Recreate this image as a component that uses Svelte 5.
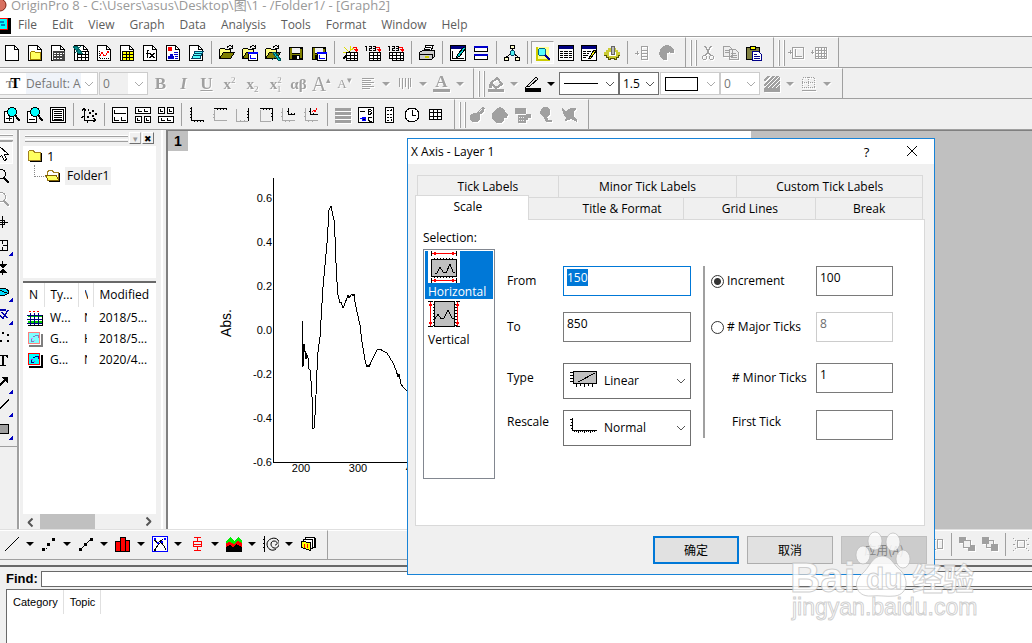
<script lang="ts">
	import { onMount } from 'svelte';

	let from = $state('150');
	let to = $state('850');
	let increment = $state('100');
	let major = $state('8');
	let minor = $state('1');
	let firstTick = $state('');
	let mode = $state('increment');
	let find = $state('');
	let fromInput: HTMLInputElement;

	onMount(() => {
		fromInput.focus();
		fromInput.select();
	});

	const menus = ['File', 'Edit', 'View', 'Graph', 'Data', 'Analysis', 'Tools', 'Format', 'Window', 'Help'];

	const page = '<path d="M1.5.5h9l4 4v11h-13z" fill="#fff" stroke="#000"/><path d="M10.5.5v4h4" fill="none" stroke="#000"/>';
	const folder = '<path d="M.5 13.5v-9l1-1h4l1 1h5v3" fill="#ffff80" stroke="#000"/><path d="M.5 13.5l4-6h11l-4 6z" fill="#808000" stroke="#000"/><path d="M8 3c1-3 4-3 5-1m0-2v3h-3" fill="none" stroke="#000"/>';
	const floppy = '<path d="M1 2h14v13H1z" fill="#000"/><path d="M2 3h2v11H2zM12 4h2v9h-2zM4 9h8v1H4z" fill="#808000"/><path d="M4 3h8v5H4z" fill="#f0f0f0"/><path d="M9 11h2v3H9z" fill="#fff"/>';
	const mini = '<path d="M6.500 7.500h9v8h-9z" fill="#fff" stroke="#000"/><path d="M6 7h10v2H6z" fill="#00f"/><path d="M8.500 10v3.500h5" fill="none" stroke="#00f"/>';
	const tableMini = '<path d="M4.500 7.500h11v8h-11z" fill="#fff" stroke="#000"/><path d="M4 10.500h12M4 13.500h12M8.500 7v9M12.500 7v9" fill="none" stroke="#000"/>';
	const nums = '<path d="M0 1.500h1.500V6M4 1.500h2v2H4v2h2.500M8 1.500h2v4H8m0-2h2" fill="none" stroke="#000"/>';
	const redArrow = '<path d="M11 2.500h3.500V6" fill="none" stroke="red"/><path d="M12 4h5l-2.500 3z" fill="red"/>';
	const lens = '<circle cx="8" cy="5" r="4.500" fill="#0ff" stroke="#000"/><path d="M11 8l4.500 6" stroke="#000" stroke-width="2"/>';
	const axes = (c: string, d: string) => `<path d="${d}" fill="none" stroke="${c}"/>`;
	const windowFrame = '<path d="M.5.500h15v15H.5z" fill="#fff" stroke="#000"/><path d="M1 1h14v3H1z" fill="#000080"/>';
	const graphThumb = (o: number) =>
		`<g opacity="${o}"><path d="M15 3v12H2" fill="none" stroke="#000" stroke-width="2"/><path d="M1.500 1.500h11v11h-11z" fill="#0ff" stroke="#f00"/><path d="M4.500 8v2h2M6 5.500h2M8 4.500h3v2" fill="none" stroke="#000080"/><path d="M4 7h2v1H4zM7 9h1v1H7z" fill="#c0f"/></g>`;

	const icons: Record<string, string> = {
		newProject: page,
		newFolder: page + '<path d="M3.500 14.500v-7l1-1h3l1 1h5v7z" fill="#ffff60" stroke="#a08000"/>',
		newSheet: page + '<path d="M3 6h12v10H3z" fill="#444"/><path d="M4 8h2v1H4zM7 8h2v1H7zM10 8h2v1h-2zM13 8h1v1h-1zM4 10h2v1H4zM7 10h2v1H7zM10 10h2v1h-2zM4 13h2v1H4zM7 13h2v1H7zM10 13h2v1h-2z" fill="#fff"/>',
		newExcel: page + '<path d="M4.500 6.500h11v9h-11zM4 9.500h12M4 12.500h12M8.500 6v10M12 6v10" fill="#fff" stroke="#000"/><path d="M0 1h4l5 7H5zM8 1L2 8" fill="#008b8b" stroke="#006060"/>',
		newGraph: page + '<path d="M3.500 6v7.500H13" fill="none" stroke="#000" stroke-dasharray="1 1"/><path d="M4 11l2-4 2 4 2-1 2-4 1 2" fill="none" stroke="red"/>',
		newMatrix: page + '<path d="M3 6h12v10H3z" fill="#000"/><path d="M4 7h3v2H4zM8 7h2v2H8zM11 7h3v2h-3zM4 10h3v2H4zM8 10h2v2H8zM11 10h3v2h-3zM4 13h3v2H4zM8 13h2v2H8zM11 13h3v2h-3z" fill="#ff0"/>',
		newFunction: page + '<path d="M7 5.500H5.500V13M4 8.500h3M8 8l4 5m0-5l-4 5" fill="none" stroke="#000" stroke-width="1.500"/>',
		newLayout: page + '<path d="M3 2h4v4H3z" fill="red"/><path d="M3 14h6v-3H8V9H5v2H3z" fill="#00c"/><path d="M9 7.500h4M9 9.500h4M10 11.500h3M10 13.500h3" stroke="#00c"/>',
		newNotes: page + '<path d="M4 13.500l3-7h8l-3 7z" fill="#5ff" stroke="#046"/><path d="M6 8.500h8M5 10.500h8" stroke="#046"/>',
		open: folder,
		openTemplate: folder + mini,
		openExcel: folder + '<path d="M7 7h3l6 8h-3zM15 7l-8 8" fill="#0cc" stroke="#055"/>',
		save: floppy,
		saveTemplate: floppy + mini,
		wizard: '<path d="M1 14L8 7" stroke="#000" stroke-width="2"/><path d="M2 2l5 5M8 1v5M1 7h5M12 3L8 6" stroke="#dd0"/>' + tableMini + redArrow,
		importOne: nums + tableMini + redArrow,
		importMany: nums + '<path d="M1.500 7.500h9v6h-9z" fill="#fff" stroke="#000"/><path d="M1 10.500h9" stroke="#000"/>' + tableMini + redArrow,
		print: '<path d="M4.500 6.500L7 .5h7l-2 6z" fill="#fff" stroke="#000"/><path d="M.5 7.500l3-2h12v6l-3 3H.5z" fill="#ccc" stroke="#000"/><path d="M7 2.500h5M6 4.500h5M1 9.500h12v4" fill="none" stroke="#000"/><path d="M6 12h4" stroke="#cc0" stroke-width="2"/>',
		refresh: windowFrame + '<path d="M2.500 6v7.500H14" fill="none" stroke="#000"/><path d="M14 2L8 9l-2 4 4-2 5-7" fill="#0cc" stroke="#000"/>',
		duplicate: '<path d="M1.500 1.500h13v5h-13zM1.500 9.500h13v5h-13z" fill="#fff" stroke="#000"/><path d="M1 1h14v2H1zM1 9h14v2H1z" fill="#00c"/>',
		explorer: '<path d="M6.500.500h4v3h-4zM.500 12.500h4v3h-4zM11.500 12.500h4v3h-4z" fill="#ffc" stroke="#000"/><path d="M8.500 4v4M2.500 12l5-4M14 12L9 8" fill="none" stroke="#000"/><circle cx="8.500" cy="8" r="2.500" fill="#5ee" stroke="#046"/>',
		results: '<path d="M1 2h13v12H1z" fill="#ffff90"/><path d="M1.500 2v12.500H15" fill="none" stroke="#cc0" stroke-width="2"/><circle cx="7" cy="7" r="4" fill="#5ff" stroke="#068"/><path d="M10 10l5 5" stroke="#008" stroke-width="2"/>',
		scriptWindow: windowFrame + '<path d="M2 6.500h3m1 0h4m1 0h3M2 8.500h3m1 0h4m1 0h3M2 10.500h3m1 0h4m1 0h3M2 12.500h3m1 0h4m1 0h3" stroke="#000"/>',
		codeBuilder: windowFrame + '<path d="M2 6.500h3m1 0h4M2 8.500h3m1 0h2M2 10.500h5M2 12.500h3" stroke="#000"/><path d="M8 13l5-8 2 1-5 7z" fill="#ff0" stroke="#000"/>',
		gear: '<path d="M0 7h2V5h2V3h8v2h2v2h2v4h-2v2h-2v2h-2v-1H6v1H4v-2H2v-2H0z" fill="#cc3"/><path d="M0 10.500h2v2h2v2h2v-1h4v1h2v-2h2v-2h2" fill="none" stroke="#550"/><path d="M5 7h7v4H5z" fill="#fff"/><path d="M7 1h3v8H7z" fill="#bbb" stroke="#666"/>',
		addColumn: '<path d="M0 8h4M2 6v4M6.500 1.500h6v13h-6zM6 5.500h7M6 8.500h7M6 11.500h7" fill="none" stroke="currentColor"/>',
		mask: '<path d="M9 8v7H5l-3-3-1-4 2-5 5-3 5 1 3 4v3h-4V7z" fill="currentColor"/>',
		cut: '<path d="M5 1l5 9M11 1L6 10" stroke="currentColor" stroke-width="1.500"/><circle cx="4.500" cy="12.500" r="2" fill="none" stroke="currentColor"/><circle cx="11.500" cy="12.500" r="2" fill="none" stroke="currentColor"/>',
		copy: '<path d="M.5 1.500h6l3 3v7h-9zM6.500 4.500h6l3 3v7h-9z" fill="#eee" stroke="currentColor"/><path d="M2 5.500h5M2 7.500h4M8 8.500h5M8 10.500h6M8 12.500h6" stroke="currentColor"/>',
		paste: '<path d="M.5 2.500h13v12H.5z" fill="#808040" stroke="#000"/><path d="M4.500 1.500h5v3h-5z" fill="#ff0" stroke="#000"/><path d="M6.500 6.500h6l3 3v6h-9z" fill="#fff" stroke="#008"/><path d="M8 9.500h3M8 11.500h6M8 13.500h6" stroke="#008"/>',
		addLayer: '<path d="M0 7h4M2 5v4M4.500 2.500h11v11h-11zM7.500 4v7.500H14" fill="none" stroke="currentColor"/>',
		addGrid: '<path d="M0 7h3M1.500 5v4M4.500 2.500h11v11h-11zM4 5.500h12M4 8.500h12M4 11.500h12M7.500 2v12M10.500 2v12M13.500 2v12" fill="none" stroke="currentColor"/>',
		alignLeft: '<path d="M2 2.500h12M2 4.500h9M2 6.500h12M2 8.500h9M2 10.500h12M2 12.500h8" stroke="currentColor"/>',
		spacing: '<path d="M2.500 2v9M5.500 2v11M8.500 2v9M11.500 2v11M13.500 2v9" stroke="currentColor"/>',
		fill: '<path d="M3 7l6-5 5 6-6 4z" fill="none" stroke="currentColor" stroke-width="2"/><path d="M1 8l3-3v7H1zM0 13h16v3H0z" fill="currentColor"/>',
		pencil: '<path d="M3 9l8-8 2 2-8 7-4 1z" fill="#ddd" stroke="#000"/><path d="M0 12h16v4H0z" fill="#000"/>',
		hatch: '<path d="M0 5l5-5M0 10L10 0M1 13L14 0M5 13L16 2M9 13l7-7M13 13l3-3" stroke="currentColor" stroke-width="1.500"/><path d="M0 12h16v4H0z" fill="currentColor"/>',
		borders: '<path d="M1.500 1.500h12v10h-12zM7.500 1v11M1 6.500h13" fill="none" stroke="currentColor" stroke-dasharray="1 1"/><path d="M1 14.500h14" stroke="currentColor"/>',
		zoomIn: '<path d="M.5 4.500h9v11h-9z" fill="#fff" stroke="#000"/>' + lens + '<path d="M2 11.500h6M5.500 9v5" stroke="#000"/>',
		zoomOut: '<path d="M.5 4.500h9v11h-9z" fill="#fff" stroke="#000"/>' + lens + '<path d="M2 12.500h6" stroke="#000"/>',
		wholePage: '<path d="M.5.500h15v15H.5zM2.500 2.500h11v11h-11z" fill="#fff" stroke="#000"/><path d="M4 4.500h8M4 6.500h8M4 8.500h8M4 10.500h8M4 12h8" stroke="#000"/>',
		rescale: '<path d="M3.500 2v11.500H15M1 4l2-3 2 3M12 11l3 2-3 2M0 11l3-2M6 16v-3" fill="none" stroke="#000"/><path d="M6 9h2v2H6zM8 5h2v2H8zM11 3h2v2h-2zM11 8h2v2h-2zM7 2h1v2H7zM14 6h2v2h-2z" fill="#000"/>',
		layerOne: '<path d="M.5.500h15v15H.5z" fill="#fff" stroke="#000"/><path d="M2.500 3v3.500h11M2.500 10v3.500H7M9.500 10v3.500H14" fill="none" stroke="#000"/>',
		layerTwo: '<path d="M.5.500h15v6H.5zM.5 9.500h6v6h-6zM9.500 9.500h6v6h-6z" fill="#fff" stroke="#000"/><path d="M3.500 2v2.500H7M9.500 2v2.500H13M2.500 11v2.500H5M11.500 11v2.500H14" fill="none" stroke="#000"/>',
		layerFour: '<path d="M.5.500h6v6h-6zM9.500.500h6v6h-6zM.5 9.500h15v6H.5z" fill="#fff" stroke="#000"/><path d="M2.500 2v2.500H5M11.500 2v2.500H14M3.500 11v2.500H7M9.500 11v2.500H13" fill="none" stroke="#000"/>',
		axisBL: axes('#000', 'M2.500 0v13.500H15M1 1.500h2M1 4.500h2M1 7.500h2M1 10.500h2M5.500 14v1M8.500 14v1M11.500 14v1M14.500 14v1'),
		axisTop: axes('#aaa', 'M2.500 3v10.500H15M1 7.500h2M1 10.500h2') + axes('#000', 'M2 1.500h13M5.500 1v2M8.500 1v2M11.500 1v2M14.500 1v2'),
		axisRight: axes('#aaa', 'M1.500 2v12.500H13M5.500 13v2M9.500 13v2') + axes('#000', 'M13.500 1v13M12 4.500h2M12 7.500h2M12 10.500h2'),
		axisTR: axes('#aaa', 'M2.500 3v11.500H13') + axes('#000', 'M2 1.500h12.500V14M5.500 1v2M8.500 1v2M11.500 1v2M13 6.500h2M13 9.500h2'),
		axisInset: axes('#aaa', 'M1.500 1v12.500H14M0 5.500h2M0 9.500h2M4.500 13v2M8.500 13v2') + axes('#000', 'M7.500 1v6.500H14M6 4.500h2M10.500 6v2M13.500 6v2'),
		axisInsetData: axes('#aaa', 'M1.500 1v12.500H14M0 5.500h2M0 9.500h2M4.500 13v2M8.500 13v2') + axes('#000', 'M6.500 1v6.500H14M5 4.500h2M9.500 6v2') + axes('red', 'M8 5l2-2 1 2 2-4'),
		merge: '<path d="M0 1h16v3H0zM0 5h16v3H0zM0 9h16v3H0zM0 13h16v3H0z" fill="currentColor"/>',
		legend: '<path d="M.5.500h15v15H.5z" fill="#fff" stroke="#000"/><path d="M2 4.500h5" stroke="#000"/><path d="M2 11.500h6M4 10h3v3H4z" stroke="#00f"/><path d="M10.500 2v5h2l1-1-1-1.500h-2m0-2h2l1 1-1 1.500M13.500 10h-2l-1 1v2l1 1h2" fill="none" stroke="#000"/>',
		colorScale: '<path d="M4.500.500h8v15h-8z" fill="#fff" stroke="#000"/><path d="M6 3h2M6 7h2M6 10h2M6 13h2M9 3h2M10 2v2M9 7h2M9 10h2M10 12v2" stroke="#000"/>',
		clock: '<circle cx="8" cy="8" r="7" fill="#fff" stroke="#000"/><path d="M8.500 3v5.500H12" fill="none" stroke="#000"/>',
		table: '<path d="M2.500 2.500h12v10h-12z" fill="#fff" stroke="#000"/><path d="M2 5.500h13M2 9.500h13M6.500 2v11M10.500 2v11" stroke="#000"/>',
		toolA: '<path d="M1 8l4-2h3l5-6 3 1-2 5-3 1v5l-3 3H3l-2-3z" fill="currentColor"/><path d="M10 5l3-3" stroke="#f0f0f0"/>',
		toolB: '<path d="M4 2l4-2 4 2 2 4 2 2-1 3h-3v3l-3 2H4l-4-4V6z" fill="currentColor"/>',
		toolC: '<path d="M0 1h11v6H0zM3 8h8v8H3zM11 7h5v4h-3v2h-2z" fill="currentColor"/><path d="M4 10.500h6M4 13.500h6" stroke="#f0f0f0" stroke-dasharray="1 1"/>',
		toolD: '<path d="M3 2l3-2h3l3 2v5l-3 4H6L2 7zM6 11l2 4h6v-2h-4v-2" fill="currentColor"/>',
		toolE: '<path d="M1 1l4 3 5-3h5v2l-2 1v6l3 3v2l-4-2-2-1-3 1-3 1 1-3-3-5z" fill="currentColor"/>',
		line: '<path d="M1 15L15 1" stroke="#000"/>',
		scatter: '<path d="M1 12h3v3H1zM6 7h3v3H6zM11 2h3v3h-3zM5 12h1v1H5z" fill="#000"/>',
		lineSymbol: '<path d="M2 14L14 2" stroke="#000"/><path d="M1 12h3v3H1zM6 7h3v3H6zM12 2h3v3h-3z" fill="#000"/>',
		columns: '<path d="M.5 5.500h5v10h-5zM5.500 1.500h5v14h-5zM10.500 4.500h4v11h-4z" fill="red" stroke="#000"/>',
		multiPanel: '<path d="M.5.500h15v15H.5z" fill="#fff" stroke="#00f"/><path d="M3 14l3-5 3-3 3 4 2 4M2 4l4 3 5-4" fill="none" stroke="#000"/><path d="M5 6h2v2H5zM9 5h2v2H9zM12 2h2v2h-2zM2 2h2v2H2z" fill="#00f"/><path d="M2 13h2v2H2z" fill="#000"/>',
		boxPlot: '<path d="M5 1.500h7M5 14.500h7M8.500 2v3M8.500 11v4M4.500 5.500h8v5h-8zM4 8.500h9" fill="none" stroke="red"/>',
		area: '<path d="M0 5l4-4 4 4 4-4 4 4v6H0z" fill="#0e0"/><path d="M0 7l4-1 4 2 4-3 4 2v8H0z" fill="red"/><path d="M0 11l4-2 3 2 3-3 6 3v5H0z" fill="#000"/>',
		polar: '<path d="M1.500 0v16M0 3.500h2M0 7.500h2M0 11.500h2" stroke="#000"/><path d="M13 13c-4 3-9 0-9-5s8-8 11-4 0 9-4 8-4-7 0-7 4 4 1 4" fill="none" stroke="#000" shape-rendering="auto"/>',
		templates: '<path d="M5.500 1.500h9v10h-9z" fill="#fff" stroke="#000"/><path d="M3.500 3.500h9v9h-9z" fill="#fff" stroke="#000"/><path d="M1.500 5.500l9 1v8l-9-3z" fill="#ff0" stroke="#000"/><path d="M4.500 8v4M7.500 8v4" stroke="red"/><path d="M15 2v10" fill="none" stroke="#000"/>',
		alignObjects: '<path d="M2.500 1v14M5 3h3M5 13h3M9.500 3.500h5v9h-5z" fill="none" stroke="currentColor"/>',
		bringFront: '<path d="M0 1h7v6H0zM9 9h7v6H9z" fill="currentColor"/><path d="M4.500 4.500h7v7h-7z" fill="#f0f0f0" stroke="currentColor"/>',
		sendBack: '<path d="M4.500 4.500h7v7h-7z" fill="#f0f0f0" stroke="currentColor"/><path d="M0 1h7v7H0zM9 8h7v7H9z" fill="currentColor"/>',
		group: '<path d="M4.500 4.500h7v7h-7z" fill="none" stroke="currentColor"/><path d="M0 2h1v1H0zM2 4h1v1H2zM13 4h1v1h-1zM15 2h1v1h-1zM0 8h2v1H0zM14 8h2v1h-2zM2 12h1v1H2zM0 14h1v1H0zM13 12h1v1h-1zM15 14h1v1h-1z" fill="currentColor"/>',
		pointer: '<path d="M4.500.500v13l3-3 3 5 2-1-2-5h4z" fill="#fff" stroke="#000"/>',
		magnify: '<circle cx="7" cy="6" r="4.500" fill="none" stroke="currentColor"/><path d="M10 10l5 5" stroke="currentColor" stroke-width="2"/>',
		reader: '<path d="M8.500 2v12M2 8.500h12M5.500 6.500h5v4h-5z" fill="none" stroke="#000"/>',
		screenReader: '<path d="M2.500 3.500h11v10h-11zM8.500 4v3M8.500 10v3M9 8.500h5M3 8.500h3" fill="none" stroke="#000"/>',
		dataSelect: '<path d="M8.500 1v4M8.500 11v4" stroke="#000"/><path d="M4 4h9l-4 4zM4 13h9L9 9z" fill="#000"/>',
		maskTool: '<path d="M1 9c4-6 12-4 14 0-2 4-10 5-14 0z" fill="#0df" stroke="#000"/><path d="M3 6l12 5" stroke="#000"/>',
		drawTool: '<path d="M2 13L6 4h6M5 9l4 3 5-8M8 6l5 6" fill="none" stroke="#00a" stroke-width="1.500"/>',
		dots: '<path d="M3 6h2v2H3zM8 3h2v2H8zM13 5h2v2h-2zM6 11h2v2H6zM13 11h2v2h-2z" fill="#000"/>',
		textTool: '<path d="M3 3h11v3h-1l-1-2H9.500v9H12v1H6v-1h2V4H5L4 6H3z" fill="#000"/>',
		arrowTool: '<path d="M2 14L12 4" stroke="#000" stroke-width="2"/><path d="M7 2h7v7z" fill="#000"/>',
		lineTool: '<path d="M2 14L15 2" stroke="#000" stroke-width="1.500"/>',
		rectTool: '<path d="M1.500 3.500h13v9h-13z" fill="#a0a0a0" stroke="#000"/>',
		folderClosed: '<path d="M1.500 12.500v-9l1-1h4l1 2h6v8z" fill="#ffff60" stroke="#a08020"/><path d="M14.500 5v8.500H3" fill="none" stroke="#000"/>',
		folderOpen: '<path d="M2.500 12.500v-8l1-2h4l1 2h5v8z" fill="#fff" stroke="#a08020"/><path d="M3.500 12.500l-3-5h11l2 5z" fill="#ffff60" stroke="#806000"/><path d="M14.500 5v8.500H4" fill="none" stroke="#000"/>',
		sheetFile: '<path d="M1 3h14v12H1z" fill="#fff"/><path d="M1 6h14M1 12h14" stroke="#0c0" stroke-width="2"/><path d="M0 5.500h16M0 9.500h16M0 13.500h16M3.500 3v13M7.500 3v13M11.500 3v13" stroke="#000080"/><path d="M1 15.500h15M15.500 5v11" stroke="#000"/><path d="M2 1h2v1H2zM6 1h2v1H6zM10 1h2v1h-2z" fill="red"/>',
		graphFileDim: graphThumb(0.5),
		graphFile: graphThumb(1)
	};

	// text drawn on the format buttons
	const glyphs: Record<string, string> = {
		bold: '<b>B</b>',
		italic: '<b><i>I</i></b>',
		underline: '<b><u>U</u></b>',
		sup: '<b class="x">x</b><sup>2</sup>',
		sub: '<b class="x">x</b><sub>2</sub>',
		supsub: '<b class="x">x</b><sup>2</sup><sub class="under">1</sub>',
		greek: '<b class="x">αβ</b>',
		bigger: '<big>A</big><sup>▴</sup>',
		smaller: '<small>A</small><sup>▾</sup>',
		fontColor: '<b class="bar">A</b>'
	};

	const standard = [
		['newProject', 'newFolder', 'newSheet', 'newExcel', 'newGraph', 'newMatrix', 'newFunction', 'newLayout', 'newNotes', '|',
			'open', 'openTemplate', 'openExcel', 'save', 'saveTemplate', '|', 'wizard', 'importOne', 'importMany', '|', 'print', '|',
			'refresh', 'duplicate', '|', 'explorer', '|', 'results', 'scriptWindow', 'codeBuilder', 'gear', '|', 'addColumn', 'mask'],
		['cut', 'copy', 'paste'],
		['addLayer', 'addGrid']
	];
	const format = ['bold', 'italic', 'underline', 'sup', 'sub', 'supsub', 'greek', 'bigger', 'smaller',
		'alignLeft', 'v', 'spacing', 'v', 'fontColor', 'v'];
	const graphBars = [
		['zoomIn', 'zoomOut', 'wholePage', '|', 'rescale', '|', 'layerOne', 'layerTwo', 'layerFour', '|',
			'axisBL', 'axisTop', 'axisRight', 'axisTR', 'axisInset', 'axisInsetData', '|', 'merge', 'legend', 'colorScale', 'clock', 'table'],
		['toolA', 'toolB', 'toolC', 'toolD', 'toolE']
	];
	const plots = ['line', 'V', 'scatter', 'V', 'lineSymbol', 'V', 'columns', 'V', 'multiPanel', 'V', 'boxPlot', 'V', 'area', 'V', 'polar', 'V', 'templates'];
	const objects = ['alignObjects', '|', 'bringFront', 'sendBack', '|', 'group'];
	const tools = ['pointer', 'magnify', 'magnify', 'reader', 'screenReader', 'dataSelect', 'maskTool', 'drawTool', 'dots', 'textTool', 'arrowTool', 'lineTool', 'rectTool'];
	const flyouts = [4, 6, 7, 10, 11, 12];

	const files = [
		{ icon: 'sheetFile', type: 'W...', view: 'N', modified: '2018/5...' },
		{ icon: 'graphFileDim', type: 'G...', view: 'H', modified: '2018/5...' },
		{ icon: 'graphFile', type: 'G...', view: 'N', modified: '2020/4...' }
	];

	const yTicks = ['0.6', '0.4', '0.2', '0.0', '-0.2', '-0.4', '-0.6'];
	const xTicks = ['200', '300', '400'];
	const curve =
		'134,190 134,236 135,235 135,219 136,213 136,221 137,220 138,228 138,222 140,227 141,238 142,239 143,250 144,266 144,286 145,298 146,297 147,284 148,264 149,239 150,221 152,206 153,189 155,156 157,134 159,112 160,96 160,81 162,77 163,75 164,80 166,89 167,106 168,132 169,151 170,164 172,172 173,171 174,174 175,177 176,175 177,172 179,167 180,164 181,167 184,163 185,165 186,163 187,171 189,181 192,194 194,211 197,229 199,236 200,234 201,236 203,231 205,227 209,219 212,218 215,220 219,222 222,227 225,232 228,239 230,246 231,243 233,253 235,256 239,260 246,268';
</script>

{#snippet icon(name: string)}
	<svg class="icon" width="16" height="16" viewBox="0 0 16 16" shape-rendering="crispEdges" aria-hidden="true">{@html icons[name]}</svg>
{/snippet}

{#snippet chevron()}
	<svg class="chevron" width="10" height="6" viewBox="0 0 10 6" fill="none" aria-hidden="true">
		<path d="M1 1l4 4 4-4" stroke="currentColor" />
	</svg>
{/snippet}

{#snippet buttons(items: string[], dim = false)}
	{#each items as item}
		{#if item === '|'}
			<span class="sep"></span>
		{:else if item === 'v' || item === 'V'}
			<button class="arrow" class:dim={item === 'v'} aria-label="More"></button>
		{:else if glyphs[item]}
			<button class="tool glyph dim" aria-label={item}>{@html glyphs[item]}</button>
		{:else}
			<button
				class="tool"
				class:dim={dim || ['addColumn', 'mask', 'cut', 'copy', 'merge'].includes(item)}
				class:pressed={item === 'results'}
				aria-label={item}
			>{@render icon(item)}</button>
		{/if}
	{/each}
{/snippet}

<div class="app">
	<header>
		<div class="titlebar">
			<svg width="8" height="16" viewBox="0 0 8 16" aria-hidden="true">
				<circle cx="0" cy="7" r="6" fill="#d87060" stroke="#802010" />
			</svg>
			<span>OriginPro 8 - C:\Users\asus\Desktop\图\1 - /Folder1/ - [Graph2]</span>
		</div>
		<nav>
			<svg width="12" height="18" viewBox="0 0 12 18" aria-hidden="true">
				<path d="M0 2h11v16H0z" fill="#000" />
				<path d="M0 2.500h7.500v11H0" fill="#0ff" stroke="red" />
				<path d="M0 6h4M1 9h4" stroke="#000080" />
			</svg>
			{#each menus as menu}
				<button>{menu}</button>
			{/each}
		</nav>
	</header>

	<div class="row">
		{#each standard as bar, i}
			<div class="bar">
				{#if i > 0}<span class="grip"></span>{/if}
				{@render buttons(bar, i === 2)}
			</div>
		{/each}
	</div>

	<div class="row">
		<div class="bar format">
			<label class="combo font off">
				<b class="tt">T<span>T</span></b>
				<select aria-label="Font"><option>Default: Arial</option></select>
				{@render chevron()}
			</label>
			<label class="combo size off">
				<select aria-label="Font size"><option>0</option></select>
				{@render chevron()}
			</label>
			{@render buttons(format, true)}
		</div>
		<div class="bar">
			<span class="grip"></span>
			{@render buttons(['fill', 'v'], true)}
			{@render buttons(['pencil', 'V'])}
			<label class="combo wide">
				<span class="stroke"></span>
				<select aria-label="Line style"><option></option></select>
				{@render chevron()}
			</label>
			<label class="combo narrow">
				<select aria-label="Line width"><option>1.5</option></select>
				{@render chevron()}
			</label>
			<label class="combo wide off">
				<span class="swatch"></span>
				<select aria-label="Border"><option></option></select>
				{@render chevron()}
			</label>
			<label class="combo narrow off">
				<select aria-label="Gap"><option>0</option></select>
				{@render chevron()}
			</label>
			{@render buttons(['hatch', 'v', 'borders', 'v'], true)}
		</div>
	</div>

	<div class="row">
		{#each graphBars as bar, i}
			<div class="bar">
				{#if i > 0}<span class="grip"></span>{/if}
				{@render buttons(bar, i > 0)}
			</div>
		{/each}
	</div>

	<main>
		<aside class="toolbox">
			<div class="tools">
				<span class="hgrip"></span>
				{#each tools as tool, i}
					<button class="tool" class:dim={i === 2} class:pressed={i === 0} class:flyout={flyouts.includes(i)} aria-label={tool}>
						{@render icon(tool)}
					</button>
				{/each}
			</div>
		</aside>

		<aside class="project">
			<div class="caption">
				<span class="hgrip"></span>
				<button class="tiny soft" aria-label="Menu">▾</button>
				<button class="tiny" aria-label="Close">✖</button>
			</div>
			<div class="tree">
				<div class="node">{@render icon('folderClosed')}<span>1</span></div>
				<div class="node child"><i></i>{@render icon('folderOpen')}<span class="current">Folder1</span></div>
			</div>
			<div class="files">
				<table>
					<thead>
						<tr><th>N</th><th>Ty...</th><th><div>V</div></th><th>Modified</th></tr>
					</thead>
					<tbody>
						{#each files as file}
							<tr>
								<td>{@render icon(file.icon)}</td>
								<td>{file.type}</td>
								<td><div>{file.view}</div></td>
								<td>{file.modified}</td>
							</tr>
						{/each}
					</tbody>
				</table>
			</div>
			<div class="scroll">
				<button class="left" aria-label="Scroll left">{@render chevron()}</button>
				<span class="thumb"></span>
				<button class="right" aria-label="Scroll right">{@render chevron()}</button>
			</div>
		</aside>

		<section class="workspace">
			<div class="graph">
				<button class="layer">1</button>
				<svg class="plot" width="584" height="398" viewBox="0 0 584 398">
					<path d="M105.500 47v284.500H560" fill="none" stroke="#000" shape-rendering="crispEdges" />
					<polyline points={curve} fill="none" stroke="#000" shape-rendering="crispEdges" />
					{#each yTicks as tick, i}
						<text x="104" y={71 + i * 44} text-anchor="end">{tick}</text>
					{/each}
					{#each xTicks as tick, i}
						<text x={133 + i * 57} y="341" text-anchor="middle">{tick}</text>
					{/each}
					<text class="axis" transform="translate(63 192) rotate(-90)" text-anchor="middle">Abs.</text>
				</svg>
			</div>
		</section>
	</main>

	<div class="row bottom">
		<div class="bar">{@render buttons(plots)}</div>
		<div class="bar last">{@render buttons(objects, true)}</div>
	</div>

	<footer>
		<label class="find">Find: <input type="text" bind:value={find} /></label>
		<div class="results">
			<table>
				<thead><tr><th>Category</th><th>Topic</th></tr></thead>
			</table>
		</div>
	</footer>

	<!-- axis dialog floats over the graph window -->
	<div class="dialog" role="dialog" aria-label="X Axis - Layer 1">
		<div class="dialog-title">
			<span>X Axis - Layer 1</span>
			<button aria-label="Help">?</button>
			<button aria-label="Close">
				<svg width="12" height="12" viewBox="0 0 12 12" aria-hidden="true"><path d="M1 1l10 10M11 1L1 11" stroke="#000" /></svg>
			</button>
		</div>
		<div class="dialog-body">
			<div class="tabs back" role="tablist">
				<button role="tab">Tick Labels</button>
				<button role="tab">Minor Tick Labels</button>
				<button role="tab">Custom Tick Labels</button>
			</div>
			<div class="tabs front" role="tablist">
				<button role="tab" class="active" aria-selected="true">Scale</button>
				<button role="tab">Title &amp; Format</button>
				<button role="tab">Grid Lines</button>
				<button role="tab">Break</button>
			</div>
			<div class="panel">
				<div class="selection">
					<span id="selection">Selection:</span>
					<div class="list" role="listbox" aria-labelledby="selection">
						<div class="option selected" role="option" aria-selected="true">
							<svg width="32" height="32" viewBox="0 0 32 32" shape-rendering="crispEdges" aria-hidden="true">
								<path d="M0 0h32v32H0z" fill="#fff" />
								<path d="M3.500 8.500h25v17h-25z" fill="#c0c0c0" stroke="#000" />
								<path d="M6 7.500h21M6 26.500h21" stroke="#000" stroke-dasharray="1 2" />
								<path d="M3.500 0v5M28.500 0v5M3.500 27v5M28.500 27v5" stroke="#000" />
								<path d="M5 2.500h23M5 29.500h23" stroke="red" />
								<path d="M4 2.500l4-2v4zM28 2.500l-4-2v4zM4 29.500l4-2v4zM28 29.500l-4-2v4z" fill="red" />
								<path d="M7 22h2l3-6 3 5 3 1 4-9 3 8h2" fill="none" stroke="#000" />
							</svg>
							Horizontal
						</div>
						<div class="option" role="option" aria-selected="false">
							<svg width="32" height="32" viewBox="0 0 32 32" shape-rendering="crispEdges" aria-hidden="true">
								<path d="M6.500 2.500h20v25h-20z" fill="#c0c0c0" stroke="#000" />
								<path d="M5.500 5v22M27.500 5v22" stroke="#000" stroke-dasharray="1 2" stroke-width="2" />
								<path d="M0 2.500h5M0 27.500h5M28 2.500h4M28 27.500h4" stroke="#000" />
								<path d="M2.500 3v24M29.500 3v24" stroke="red" />
								<path d="M2.500 3l-2 4h4zM2.500 27l-2-4h4zM29.500 3l-2 4h4zM29.500 27l-2-4h4z" fill="red" />
								<path d="M7 20l3-5 3 5 3-1 4-8 4 8h2" fill="none" stroke="#000" />
							</svg>
							Vertical
						</div>
					</div>
				</div>

				<div class="fields">
					<label for="from">From</label>
					<input id="from" type="text" bind:value={from} bind:this={fromInput} />
					<label for="to">To</label>
					<input id="to" type="text" bind:value={to} />
					<label for="type">Type</label>
					<div class="combo picker">
						<svg width="28" height="17" viewBox="0 0 28 17" shape-rendering="crispEdges" aria-hidden="true">
							<path d="M3.500.500h23v12h-23z" fill="#c0c0c0" stroke="#000" />
							<path d="M0 1.500h3M0 4.500h3M0 7.500h3M0 10.500h3M6.500 13v3M10.500 13v2M14.500 13v3M18.500 13v2M22.500 13v3M8 11L25 2" stroke="#000" />
						</svg>
						<select id="type"><option>Linear</option></select>
						{@render chevron()}
					</div>
					<label class="short" for="rescale">Rescale</label>
					<div class="combo picker">
						<svg width="28" height="17" viewBox="0 0 28 17" shape-rendering="crispEdges" aria-hidden="true">
							<path d="M2.500 0v12.500H27" fill="none" stroke="#000" />
							<path d="M0 1.500h2M1 4.500h2M0 7.500h2M1 10.500h2" stroke="#000" />
							<path d="M4 13.500h22" stroke="#000" stroke-dasharray="1 1" />
							<path d="M8.500 13v2M14.500 13v2M20.500 13v2" stroke="#000" />
						</svg>
						<select id="rescale"><option>Normal</option></select>
						{@render chevron()}
					</div>
				</div>

				<div class="fields ticks">
					<label><input type="radio" value="increment" bind:group={mode} />Increment</label>
					<input type="text" aria-label="Increment value" bind:value={increment} />
					<label><input type="radio" value="major" bind:group={mode} /># Major Ticks</label>
					<input type="text" aria-label="Major ticks" bind:value={major} disabled={mode !== 'major'} />
					<label class="indent" for="minor"># Minor Ticks</label>
					<input id="minor" type="text" bind:value={minor} />
					<label class="indent short" for="first">First Tick</label>
					<input id="first" type="text" bind:value={firstTick} />
				</div>
			</div>
			<div class="actions">
				<button class="default">确定</button>
				<button>取消</button>
				<button disabled>应用(A)</button>
			</div>
		</div>
	</div>

	<svg class="watermark" width="196" height="96" viewBox="0 0 196 96" aria-hidden="true">
		<g fill="#fff" fill-opacity="0.8" stroke="#bbb" stroke-opacity="0.7">
			<ellipse cx="85" cy="13" rx="7" ry="9" />
			<ellipse cx="103" cy="14" rx="7" ry="9" />
			<ellipse cx="73" cy="27" rx="7" ry="9" />
			<ellipse cx="113" cy="31" rx="7" ry="9" />
			<path d="M92 28c9 0 11 8 17 13 10 8 10 25-4 27-8 1-16-1-24 0-15 1-19-14-9-22 8-7 10-18 20-18z" />
			<text x="0" y="64" class="brand">Bai</text>
			<text x="76" y="61" class="du">du</text>
			<text x="122" y="62" class="cn">经验</text>
			<text x="2" y="87" class="url">jingyan.baidu.com</text>
		</g>
	</svg>
</div>

<style>
	:global(body) {
		margin: 0;
		background: #f0f0f0;
	}

	.app {
		position: relative;
		display: flex;
		flex-direction: column;
		min-height: 100vh;
		overflow: hidden;
		background: #f0f0f0;
		color: #000;
		font: 12px/18px 'Open Sans', 'Noto Sans CJK SC', sans-serif;
	}

	.app :global(*) {
		box-sizing: border-box;
	}

	button,
	input,
	select {
		font: inherit;
		color: inherit;
		margin: 0;
	}

	button {
		padding: 0;
		border: 0;
		background: none;
	}

	.icon {
		display: block;
		flex-shrink: 0;
	}

	/* ── Title and menu ── */
	header {
		background: #fff;
		color: #5c5c5c;
	}

	.titlebar {
		display: flex;
		align-items: flex-end;
		gap: 3px;
		height: 14px;
		color: #999;
		font-size: 13px;
		white-space: nowrap;
	}

	nav {
		display: flex;
		align-items: center;
		gap: 15px;
		height: 22px;
	}

	nav svg {
		margin-right: -9px;
	}

	/* ── Toolbars ── */
	.row {
		display: flex;
		height: 31px;
		border-top: 1px solid #a0a0a0;
	}

	.bar {
		display: flex;
		align-items: center;
		padding: 0 8px 0 0;
		border-top: 1px solid #fff;
		border-right: 1px solid #a0a0a0;
	}

	.bar.format {
		padding-right: 6px;
	}

	.tool {
		display: flex;
		flex-shrink: 0;
		align-items: center;
		justify-content: center;
		width: 23px;
		height: 23px;
	}

	.tool.pressed {
		border: 1px solid;
		border-color: #a0a0a0 #fff #fff #a0a0a0;
		background: #f8f8f8;
	}

	.dim {
		color: #a0a0a0;
		filter: drop-shadow(1px 1px 0 #fff);
	}

	.sep {
		width: 8px;
		height: 23px;
		border-right: 3px solid transparent;
		background: linear-gradient(to right, transparent 4px, #a0a0a0 4px) no-repeat;
	}

	.grip {
		width: 6px;
		height: 26px;
		margin: 0 0 0 4px;
		border: 1px solid #fff;
		border-width: 0 1px;
		box-shadow: 1px 0 0 #a0a0a0, inset -1px 0 0 #f0f0f0, inset 1px 0 0 #a0a0a0;
	}

	.arrow {
		display: flex;
		justify-content: center;
		width: 14px;
	}

	.arrow::before {
		content: '';
		border: 4px solid transparent;
		border-top-color: #000;
		border-bottom: 0;
	}

	.arrow.dim::before {
		border-top-color: #a0a0a0;
	}

	.glyph {
		font: 17px/20px 'Liberation Serif', serif;
	}

	.glyph :global(.x) {
		font-size: 15px;
	}

	.glyph :global(sup),
	.glyph :global(sub) {
		font-size: 9px;
		line-height: 10px;
	}

	.glyph :global(sup) {
		margin-bottom: 8px;
	}

	.glyph :global(sub) {
		margin-top: 10px;
	}

	.glyph :global(.under) {
		margin-left: -5px;
	}

	.glyph :global(big) {
		font-size: 20px;
	}

	.glyph :global(small) {
		font-size: 13px;
	}

	.glyph :global(.bar) {
		padding: 0 2px;
		border-bottom: 3px solid #a0a0a0;
		line-height: 14px;
	}

	/* ── Combos ── */
	.combo {
		display: grid;
		grid-template-columns: 1fr 16px;
		align-items: center;
		height: 23px;
		border: 1px solid #707070;
		background: #fff;
	}

	.combo > * {
		grid-row: 1;
	}

	.combo select {
		grid-column: 1 / -1;
		width: 100%;
		height: 100%;
		padding: 0 0 0 3px;
		border: 0;
		outline: 0;
		background: none;
		appearance: none;
	}

	.chevron {
		color: #555;
	}

	.combo .chevron {
		grid-column: 2;
		justify-self: center;
		pointer-events: none;
	}

	.combo.off {
		border-color: #ccc;
		color: #777;
	}

	.combo.off .chevron {
		color: #aaa;
	}

	.combo.font {
		grid-template-columns: 26px 1fr 16px;
		width: 99px;
		margin-left: -1px;
	}

	.combo.font select {
		grid-column: 2;
		padding-left: 0;
		background: #f0f4fa;
	}

	.combo.font .chevron {
		grid-column: 3;
	}

	.tt {
		padding-left: 6px;
		font: bold 11px/14px 'Liberation Serif', serif;
	}

	.tt span {
		margin-left: -3px;
		font-size: 15px;
		color: #000;
	}

	.combo.size {
		width: 49px;
		margin: 0 1px;
	}

	.combo.size select {
		width: 28px;
		background: #f0f0f0;
	}

	.combo.wide {
		width: 60px;
		margin-left: 1px;
	}

	.combo.narrow {
		width: 40px;
	}

	.stroke,
	.swatch {
		grid-column: 1;
		margin-left: 4px;
		border-top: 1px solid #000;
	}

	.stroke {
		margin-right: 4px;
	}

	.swatch {
		height: 14px;
		margin-right: 5px;
		border: 1px solid #000;
	}

	/* ── Main area ── */
	main {
		display: flex;
		flex: 1;
		min-height: 0;
		border-top: 1px solid #a0a0a0;
	}

	.toolbox {
		width: 19px;
		overflow: hidden;
		border-right: 2px solid #a0a0a0;
	}

	.tools {
		display: flex;
		flex-direction: column;
		align-items: flex-end;
		padding: 4px 4px 6px 0;
		border-bottom: 1px solid #a0a0a0;
	}

	.hgrip {
		flex-shrink: 0;
		align-self: stretch;
		height: 7px;
		border: 1px solid #fff;
		border-bottom-color: #a0a0a0;
		border-width: 1px 0;
		background: linear-gradient(#a0a0a0 1px, transparent 1px 3px, #fff 3px 4px, transparent 4px);
	}

	.flyout {
		background: linear-gradient(135deg, transparent 50%, #0000c0 50%) right bottom / 4px 4px no-repeat;
	}

	.project {
		display: flex;
		flex-direction: column;
		width: 147px;
		padding: 0 10px 0 3px;
		border-left: 1px solid #fff;
		box-shadow: inset -3px 0 0 #f0f0f0, inset -5px 0 0 #fff;
	}

	.caption {
		display: flex;
		align-items: center;
		gap: 1px;
		height: 16px;
		padding: 0 2px;
	}

	.caption .hgrip {
		flex: 1;
		align-self: center;
	}

	.tiny {
		width: 12px;
		height: 12px;
		border: 1px solid;
		border-color: #fff #707070 #707070 #fff;
		font-size: 9px;
		line-height: 9px;
	}

	.tiny.soft {
		border-right-color: #aaa;
		color: #999;
	}

	.tree {
		height: 132px;
		padding: 0 4px;
		background: #fff;
	}

	.node {
		display: flex;
		align-items: center;
		gap: 4px;
		height: 20px;
		font-size: 13px;
	}

	.node.child {
		padding-left: 7px;
	}

	.node i {
		width: 12px;
		height: 12px;
		margin: 0 -5px 10px 0;
		border: 1px dotted #888;
		border-width: 0 0 1px 1px;
	}

	.current {
		padding: 0 2px;
		background: #f0f0f0;
		font-size: 12px;
	}

	.files {
		flex: 1;
		margin-top: 3px;
		border-top: 2px solid #696969;
		background: #fff;
	}

	table {
		border-collapse: collapse;
	}

	.files table {
		width: 100%;
		table-layout: fixed;
	}

	th,
	td {
		padding: 0 0 0 6px;
		text-align: left;
		font-weight: 400;
		white-space: nowrap;
	}

	.files th {
		height: 24px;
		border-right: 1px solid #e0e0e0;
	}

	.files th:nth-child(1) {
		width: 21px;
	}

	.files th:nth-child(2) {
		width: 34px;
	}

	.files th:nth-child(3) {
		width: 15px;
	}

	.files th:last-child {
		border: 0;
	}

	.files td {
		height: 21px;
	}

	.files td:first-child {
		padding-left: 4px;
	}

	.files table div {
		width: 3px;
		overflow: hidden;
	}

	.scroll {
		display: flex;
		align-items: center;
		height: 15px;
	}

	.scroll button {
		width: 17px;
	}

	.scroll :global(path) {
		stroke-width: 2;
	}

	.left {
		transform: rotate(90deg);
	}

	.right {
		margin-left: auto;
		transform: rotate(-90deg);
	}

	.thumb {
		width: 55px;
		height: 15px;
		background: #c0c0c0;
	}

	.workspace {
		flex: 1;
		min-width: 0;
		border: 2px solid #808080;
		border-width: 1px 0 0 2px;
		background: #c0c0c0;
	}

	.graph {
		display: grid;
		width: 67.5%;
		height: 100%;
		overflow: hidden;
		background: #fff;
	}

	.layer {
		z-index: 1;
		grid-area: 1 / 1;
		width: 20px;
		height: 20px;
		background: #c0c0c0;
		font: bold 14px/20px 'Liberation Sans', sans-serif;
	}

	.plot {
		grid-area: 1 / 1;
	}

	.plot text {
		font: 11px 'Liberation Sans', sans-serif;
	}

	.plot .axis {
		font-size: 14px;
	}

	.row.bottom {
		border-top-color: #e0e0e0;
	}

	.bottom .bar {
		padding-bottom: 2px;
		border-bottom: 1px solid #a0a0a0;
	}

	.bottom .last {
		flex: 1;
		justify-content: flex-end;
		padding-right: 0;
		border-right: 0;
	}

	/* ── Find pane ── */
	footer {
		margin-top: 5px;
		padding: 4px 0 0 6px;
		border-top: 2px solid #696969;
		font-family: 'Liberation Sans', sans-serif;
	}

	.find {
		display: flex;
		align-items: center;
		gap: 3px;
		height: 16px;
		font-weight: 700;
		font-size: 13px;
		line-height: 14px;
	}

	.find input {
		flex: 1;
		height: 16px;
		border: 1px solid #696969;
		border-right: 0;
		background: #fff;
	}

	.results {
		height: 54px;
		margin-top: 2px;
		border: 1px solid #696969;
		border-width: 1px 0 0 1px;
		background: #fff;
		font-size: 11px;
	}

	.results th {
		height: 24px;
		padding: 0 5px 0 6px;
		border-right: 1px solid #e0e0e0;
	}

	/* ── Dialog ── */
	.dialog {
		position: absolute;
		top: 138px;
		left: 407px;
		width: 528px;
		border: 1px solid #1883d7;
		background: #f0f0f0;
	}

	.dialog-title {
		display: flex;
		align-items: center;
		height: 25px;
		padding-left: 3px;
		background: #fff;
	}

	.dialog-title span {
		flex: 1;
	}

	.dialog-title button {
		width: 45px;
		font-size: 13px;
	}

	.dialog-body {
		padding: 11px 9px 10px 7px;
	}

	.tabs {
		display: grid;
		padding: 0 2px;
	}

	.tabs.back {
		grid-template-columns: 141fr 179fr 187fr;
	}

	.tabs.front {
		grid-template-columns: 112fr 155fr 132fr 108fr;
	}

	.tabs button {
		height: 22px;
		border: 1px solid #d9d9d9;
		border-width: 1px 0 0 1px;
	}

	.tabs button:last-child {
		border-right-width: 1px;
	}

	.tabs.front button:nth-child(2) {
		padding-left: 32px;
		border-left: 0;
	}

	.tabs .active {
		z-index: 1;
		height: 25px;
		margin: -2px 0 -1px -2px;
		padding: 0 8px 2px 0;
		border-width: 1px 1px 0;
		background: #fff;
	}

	.panel {
		display: flex;
		height: 307px;
		padding: 9px 7px;
		border: 1px solid #d9d9d9;
		background: #fff;
	}

	.selection {
		display: flex;
		flex-direction: column;
		gap: 2px;
		width: 72px;
	}

	.list {
		height: 230px;
		padding: 1px;
		border: 1px solid #828790;
	}

	.option {
		height: 48px;
		padding: 0 3px;
		line-height: 18px;
	}

	.option svg {
		display: block;
	}

	.selected {
		background: #0078d7;
		color: #fff;
	}

	.fields {
		display: grid;
		grid-template-columns: 56px 128px;
		grid-template-rows: 46px 51px 47px 36px;
		align-items: start;
		height: 172px;
		margin: 37px 0 0 12px;
	}

	.fields label {
		display: flex;
		align-items: center;
		height: 30px;
	}

	.fields .short {
		height: 24px;
	}

	.fields input[type='text'] {
		width: 100%;
		height: 30px;
		padding: 0 3px 7px;
		border: 1px solid #7a7a7a;
		outline: 0;
		background: #fff;
	}

	.fields input[type='text']:focus {
		border-color: #0078d7;
	}

	.fields input[type='text']:disabled {
		border-color: #ccc;
		color: #6d6d6d;
	}

	input::selection {
		background: #0078d7;
		color: #fff;
	}

	.picker {
		grid-template-columns: 34px 1fr 18px;
		height: 36px;
	}

	.picker > svg:first-child {
		grid-column: 1;
		margin-left: 6px;
		margin-bottom: 3px;
	}

	.picker select {
		padding-left: 40px;
	}

	.picker .chevron {
		grid-column: 3;
	}

	.ticks {
		grid-template-columns: 105px 77px;
		padding-left: 6px;
		border-left: 2px solid #a0a0a0;
	}

	.ticks label {
		white-space: nowrap;
	}

	.ticks .indent {
		padding-left: 21px;
	}

	.ticks input[type='radio'] {
		width: 13px;
		height: 13px;
		margin: 0 3px 0 0;
		border: 1px solid #333;
		border-radius: 50%;
		background: #fff;
		appearance: none;
	}

	.ticks input[type='radio']:checked {
		background: radial-gradient(#333 0 3px, #fff 4px);
	}

	.actions {
		display: flex;
		justify-content: flex-end;
		gap: 8px;
		margin: 10px -2px 0 0;
	}

	.actions button {
		width: 86px;
		height: 28px;
		border: 1px solid #adadad;
		background: #e1e1e1;
		font-family: 'Noto Sans CJK SC', sans-serif;
	}

	.actions .default {
		border: 2px solid #0078d7;
	}

	.actions button:disabled {
		border-color: #bfbfbf;
		background: #ccc;
		color: #838383;
	}

	.watermark {
		position: absolute;
		top: 528px;
		left: 790px;
		pointer-events: none;
	}

	.brand {
		font: bold 42px 'Liberation Sans', sans-serif;
	}

	.du {
		font: bold 30px 'Liberation Sans', sans-serif;
	}

	.cn {
		font: bold 31px 'Noto Sans CJK SC', sans-serif;
	}

	.url {
		font: 23px 'Liberation Sans', sans-serif;
	}
</style>
